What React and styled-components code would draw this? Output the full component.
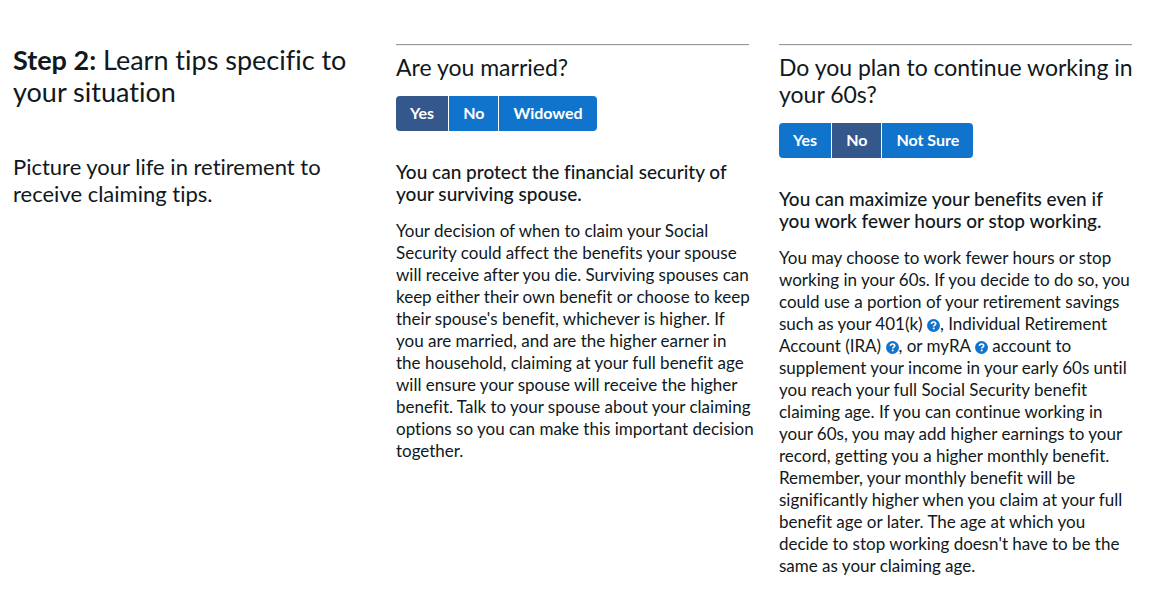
import React, { useState } from "react";
import styled, { createGlobalStyle } from "styled-components";

const colors = {
  text: "#101820",
  blue: "#1174cc",
  selected: "#35588c",
  line: "#9a9a9a",
  lineShade: "#eeeeee",
};

const GlobalStyle = createGlobalStyle`
  * {
    box-sizing: border-box;
  }
  body {
    margin: 0;
    background-color: white;
    color: ${colors.text};
    font-family: Lato, "Open Sans", sans-serif;
    font-size: 17px;
    line-height: 22px;
    font-variant-ligatures: none;
  }
`;

const Step = styled.main`
  display: grid;
  grid-template-columns: repeat(3, minmax(0, 1fr));
  gap: 30px;
  align-items: start;
  padding: 44px 18px 20px 13px;
  @media (max-width: 1023px) {
    grid-template-columns: 1fr;
    br {
      display: none;
    }
  }
`;

const Title = styled.h2`
  margin: 0 0 45px;
  font-size: 27px;
  line-height: 32px;
  font-weight: 400;
  strong {
    font-weight: 700;
  }
`;

const Intro = styled.p`
  margin: 0;
  font-size: 22px;
  line-height: 27px;
`;

const Rule = styled.hr`
  margin: 0 0 8px;
  border: 0;
  border-top: 1px solid ${colors.line};
  border-bottom: 1px solid ${colors.lineShade};
`;

const QuestionTitle = styled.h3`
  margin: 0 -12px 15px 0;
  font-size: 23px;
  line-height: 27px;
  font-weight: 400;
  @media (max-width: 1023px) {
    margin-right: 0;
  }
`;

const ButtonGroup = styled.div`
  display: flex;
  gap: 1px;
  margin-bottom: 30px;
`;

const AnswerButton = styled.button`
  height: 35px;
  padding: 0 14px 2px;
  border: 0;
  background-color: ${(props) =>
    props.$selected ? colors.selected : colors.blue};
  color: white;
  font-family: inherit;
  font-size: 16px;
  line-height: 22px;
  font-weight: 700;
  cursor: pointer;
  &:first-child {
    border-radius: 4px 0 0 4px;
  }
  &:last-child {
    border-radius: 0 4px 4px 0;
  }
`;

const TipTitle = styled.h4`
  margin: 0 0 15px;
  font-size: 19px;
  line-height: 22px;
  font-weight: 500;
`;

const TipText = styled.p`
  margin: 0 -12px 0 0;
  @media (max-width: 1023px) {
    margin-right: 0;
  }
`;

const HelpLink = styled.a`
  display: inline-block;
  height: 13px;
  line-height: 0;
  vertical-align: -2px;
  color: ${colors.blue};
`;

const Help = ({ label }) => (
  <HelpLink href="#help" aria-label={label}>
    <svg width="13" height="13" viewBox="0 0 13 13">
      <circle cx="6.5" cy="6.5" r="6.5" fill="currentColor" />
      <path
        d="M4.4 4.9C4.5 3.6 5.4 3 6.6 3c1.3 0 2.1.7 2.1 1.7 0 1.4-2 1.4-2 2.9"
        fill="none"
        stroke="white"
        strokeWidth="1.7"
      />
      <rect x="5.8" y="8.6" width="1.8" height="1.7" fill="white" />
    </svg>
  </HelpLink>
);

const Question = ({ title, answers, initial, tip, children }) => {
  const [answer, setAnswer] = useState(initial);

  return (
    <section>
      <Rule />
      <QuestionTitle>{title}</QuestionTitle>
      <ButtonGroup role="group" aria-label="Your answer">
        {answers.map((item) => (
          <AnswerButton
            key={item}
            type="button"
            $selected={item === answer}
            aria-pressed={item === answer}
            onClick={() => setAnswer(item)}
          >
            {item}
          </AnswerButton>
        ))}
      </ButtonGroup>
      <TipTitle>{tip}</TipTitle>
      <TipText>{children}</TipText>
    </section>
  );
};

const App = () => {
  return (
    <>
      <GlobalStyle />
      <Step>
        <div>
          <Title>
            <strong>Step 2:</strong> Learn tips specific to <br />
            your situation
          </Title>
          <Intro>
            Picture your life in retirement to <br />
            receive claiming tips.
          </Intro>
        </div>
        <Question
          title="Are you married?"
          answers={["Yes", "No", "Widowed"]}
          initial="Yes"
          tip={
            <>
              You can protect the financial security of <br />
              your surviving spouse.
            </>
          }
        >
          Your decision of when to claim your Social <br />
          Security could affect the benefits your spouse <br />
          will receive after you die. Surviving spouses can <br />
          keep either their own benefit or choose to keep <br />
          their spouse's benefit, whichever is higher. If <br />
          you are married, and are the higher earner in <br />
          the household, claiming at your full benefit age <br />
          will ensure your spouse will receive the higher <br />
          benefit. Talk to your spouse about your claiming <br />
          options so you can make this important decision <br />
          together.
        </Question>
        <Question
          title={
            <>
              Do you plan to continue working in <br />
              your 60s?
            </>
          }
          answers={["Yes", "No", "Not Sure"]}
          initial="No"
          tip={
            <>
              You can maximize your benefits even if <br />
              you work fewer hours or stop working.
            </>
          }
        >
          You may choose to work fewer hours or stop <br />
          working in your 60s. If you decide to do so, you <br />
          could use a portion of your retirement savings <br />
          such as your 401(k) <Help label="About 401(k)" />, Individual
          Retirement <br />
          Account (IRA) <Help label="About IRA" />, or myRA{" "}
          <Help label="About myRA" /> account to <br />
          supplement your income in your early 60s until <br />
          you reach your full Social Security benefit <br />
          claiming age. If you can continue working in <br />
          your 60s, you may add higher earnings to your <br />
          record, getting you a higher monthly benefit. <br />
          Remember, your monthly benefit will be <br />
          significantly higher when you claim at your full <br />
          benefit age or later. The age at which you <br />
          decide to stop working doesn't have to be the <br />
          same as your claiming age.
        </Question>
      </Step>
    </>
  );
};

export default App;
